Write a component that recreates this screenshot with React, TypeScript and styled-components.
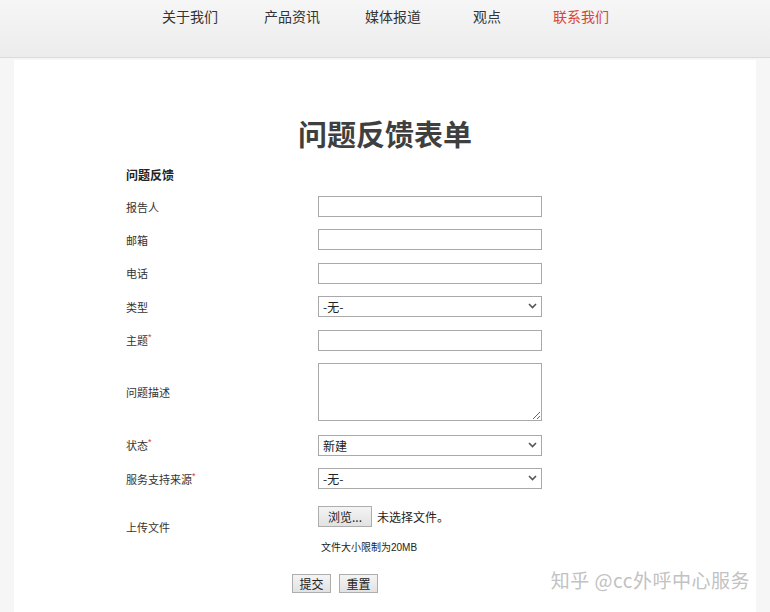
import styled, { createGlobalStyle } from "styled-components";

const Global = createGlobalStyle`
    html, body {
        margin: 0;
        padding: 0;
        background: #f6f6f6;
        font-family: "Liberation Sans", "Noto Sans CJK SC", sans-serif;
        color: #333;
    }
`;

const Page = styled.div`
    position: relative;
    width: 770px;
    height: 612px;
    overflow: hidden;
`;

const Header = styled.header`
    height: 57px;
    background: linear-gradient(#f6f6f6, #ececec);
    border-bottom: 1px solid #dadada;
`;

const Nav = styled.ul`
    display: flex;
    list-style: none;
    margin: 0;
    padding: 8px 0 0 162px;
`;

const NavItem = styled.li<{ $active?: boolean; $gap: number }>`
    font-size: 14px;
    line-height: 18px;
    margin-right: ${(p) => p.$gap}px;
    color: ${(p) => (p.$active ? "#d9443a" : "#333")};
    cursor: pointer;
`;

const Panel = styled.main`
    margin: 2px 14px 0 14px;
    background: #fff;
    height: 560px;
    padding-top: 58px;
    box-sizing: border-box;
`;

const Title = styled.h1`
    margin: 0;
    text-align: center;
    font-size: 29px;
    line-height: 36px;
    font-weight: 700;
    color: #3f3f3f;
`;

const Form = styled.form`
    margin: 14px 0 0 112px;
`;

const Section = styled.h3`
    margin: 0 0 12px;
    font-size: 12px;
    font-weight: 700;
    color: #222;
    line-height: 16px;
`;

const Row = styled.div<{ $space?: number }>`
    display: grid;
    grid-template-columns: 192px 224px;
    align-items: center;
    margin-bottom: ${(p) => p.$space ?? 12.4}px;
`;

const Label = styled.label<{ $lift?: number }>`
    font-size: 11px;
    color: #333;
    margin-bottom: ${(p) => p.$lift ?? 0}px;
`;

const Star = styled.span`
    color: #d23a3a;
    font-size: 9px;
    vertical-align: top;
`;

const Input = styled.input`
    box-sizing: border-box;
    width: 224px;
    height: 21px;
    border: 1px solid #a9a9a9;
    padding: 0 4px;
    font-size: 12px;
    outline: none;
`;

const TextArea = styled.textarea`
    box-sizing: border-box;
    width: 224px;
    height: 58px;
    border: 1px solid #a9a9a9;
    font-size: 12px;
    outline: none;
    resize: both;
`;

const SelectWrap = styled.div`
    position: relative;
    width: 224px;
    height: 21px;
`;

const Select = styled.select`
    appearance: none;
    box-sizing: border-box;
    width: 224px;
    height: 21px;
    border: 1px solid #a9a9a9;
    background: #fff;
    padding: 0 4px;
    font-family: "Noto Sans CJK SC", sans-serif;
    font-size: 12px;
    color: #222;
    outline: none;
`;

const Chevron = styled.svg`
    position: absolute;
    right: 5px;
    top: 7px;
    pointer-events: none;
`;

const Upload = styled.div`
    display: flex;
    flex-direction: column;
    gap: 12px;
`;

const FileLine = styled.div`
    display: flex;
    align-items: center;
    gap: 5px;
    font-size: 12px;
    color: #222;
`;

const Btn = styled.button`
    box-sizing: border-box;
    height: 21px;
    padding: 0 6px;
    border: 1px solid #adadad;
    background: linear-gradient(#f4f4f4, #e2e2e2);
    font-family: "Noto Sans CJK SC", sans-serif;
    font-size: 12px;
    color: #222;
    border-radius: 0;
`;

const BrowseBtn = styled(Btn)`
    width: 54px;
    padding: 0;
`;

const Small = styled.div`
    font-size: 10px;
    color: #222;
    padding-left: 3px;
`;

const Actions = styled.div`
    display: flex;
    gap: 8px;
    margin: 20px 0 0 166px;
    ${Btn} {
        height: 19px;
        width: 39px;
        padding: 0;
    }
`;

const Watermark = styled.div`
    position: absolute;
    right: 20px;
    bottom: 19px;
    font-size: 19px;
    color: #c2c2c2;
    text-shadow: 0 0 1px #fff;
    font-family: "Noto Sans CJK SC", sans-serif;
    letter-spacing: 0.5px;
`;

const navItems = [
    { text: "关于我们", gap: 46 },
    { text: "产品资讯", gap: 45 },
    { text: "媒体报道", gap: 52 },
    { text: "观点", gap: 52 },
    { text: "联系我们", gap: 0, active: true },
];

function Dropdown({ value }: { value: string }) {
    return (
        <SelectWrap>
            <Select defaultValue={value}>
                <option>{value}</option>
            </Select>
            <Chevron width="9" height="6" viewBox="0 0 9 6">
                <path d="M1 1l3.5 3.5L8 1" fill="none" stroke="#555" strokeWidth="1.6" />
            </Chevron>
        </SelectWrap>
    );
}

export default function App() {
    return (
        <Page>
            <Global />
            <Header>
                <Nav>
                    {navItems.map((n) => (
                        <NavItem key={n.text} $gap={n.gap} $active={n.active}>
                            {n.text}
                        </NavItem>
                    ))}
                </Nav>
            </Header>
            <Panel>
                <Title>问题反馈表单</Title>
                <Form onSubmit={(e) => e.preventDefault()}>
                    <Section>问题反馈</Section>
                    <Row>
                        <Label>报告人</Label>
                        <Input />
                    </Row>
                    <Row>
                        <Label>邮箱</Label>
                        <Input />
                    </Row>
                    <Row>
                        <Label>电话</Label>
                        <Input />
                    </Row>
                    <Row>
                        <Label>类型</Label>
                        <Dropdown value="-无-" />
                    </Row>
                    <Row>
                        <Label>
                            主题<Star>*</Star>
                        </Label>
                        <Input />
                    </Row>
                    <Row $space={14}>
                        <Label>问题描述</Label>
                        <TextArea />
                    </Row>
                    <Row>
                        <Label>
                            状态<Star>*</Star>
                        </Label>
                        <Dropdown value="新建" />
                    </Row>
                    <Row $space={17}>
                        <Label>
                            服务支持来源<Star>*</Star>
                        </Label>
                        <Dropdown value="-无-" />
                    </Row>
                    <Row $space={0}>
                        <Label $lift={6}>上传文件</Label>
                        <Upload>
                            <FileLine>
                                <BrowseBtn type="button">浏览...</BrowseBtn>
                                <span>未选择文件。</span>
                            </FileLine>
                            <Small>文件大小限制为20MB</Small>
                        </Upload>
                    </Row>
                    <Actions>
                        <Btn type="submit">提交</Btn>
                        <Btn type="reset">重置</Btn>
                    </Actions>
                </Form>
            </Panel>
            <Watermark>知乎 @cc外呼中心服务</Watermark>
        </Page>
    );
}
